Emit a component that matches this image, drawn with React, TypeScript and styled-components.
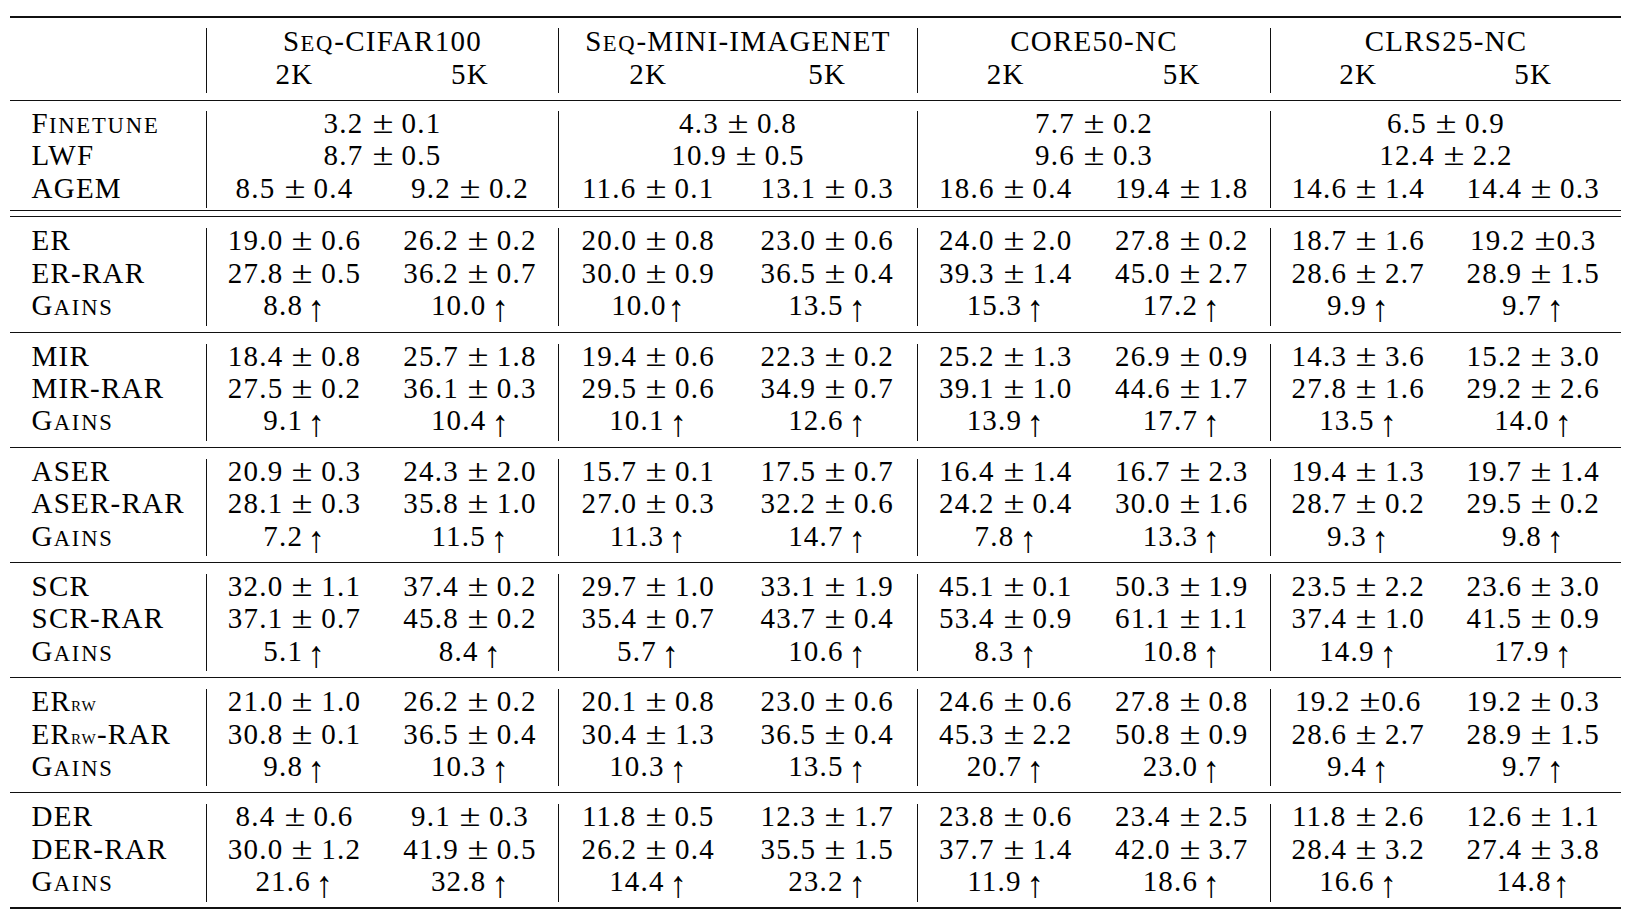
import React from "react";
import styled, { createGlobalStyle } from "styled-components";

const GlobalStyle = createGlobalStyle`
  html, body { margin: 0; padding: 0; background: #ffffff; }
  body {
    font-family: "Liberation Serif", "Times New Roman", serif;
    color: #000;
    -webkit-font-smoothing: antialiased;
  }
`;

const COLS = "196px 176px 176px 179.5px 179.5px 176.5px 176.5px 175.5px 175.5px";

const Page = styled.div`
  width: 1630px;
  height: 921px;
  box-sizing: border-box;
  padding: 16px 0 0 10px;
  background: #fff;
  overflow: hidden;
`;

const Table = styled.div`
  width: 1611px;
  display: flex;
  flex-direction: column;
  font-size: 29px;
  letter-spacing: 0.043em;
`;

const Rule = styled.div<{ $thick?: boolean; $gap: number }>`
  height: ${(p) => (p.$thick ? 2 : 1)}px;
  background: #111;
  margin-top: ${(p) => p.$gap}px;
  flex: none;
`;

const Grid = styled.div<{ $row: number; $lh: number; $gap: number }>`
  display: grid;
  grid-template-columns: ${COLS};
  grid-auto-rows: ${(p) => p.$row}px;
  line-height: ${(p) => p.$lh}px;
  margin-top: ${(p) => p.$gap}px;
  flex: none;
`;

const Cell = styled.div<{ $span?: number; $sep?: boolean }>`
  grid-column: span ${(p) => p.$span ?? 1};
  text-align: center;
  white-space: nowrap;
  box-sizing: border-box;
  border-left: ${(p) => (p.$sep ? "1px solid #111" : "0")};
`;

const Label = styled.div`
  padding-left: 21.5px;
  text-align: left;
  white-space: nowrap;
`;

const Small = styled.span<{ $scale?: number }>`
  font-size: ${(p) => p.$scale ?? 0.78}em;
  letter-spacing: 0.08em;
`;

/* the plus-minus sign of the LaTeX math font is wider than the text one */
const Pm = styled.span<{ $tight?: boolean }>`
  display: inline-block;
  line-height: 16px;
  height: 16px;
  letter-spacing: 0;
  transform: scale(1.32, 1.1);
  transform-origin: 50% 17.8px;
  margin-left: 11px;
  margin-right: ${(p) => (p.$tight ? 4 : 11)}px;
`;

const Arrow = styled.span<{ $tight?: boolean }>`
  display: inline-block;
  line-height: 16px;
  height: 16px;
  letter-spacing: 0;
  transform: translateY(5.5px) scale(1.2, 1.28);
  transform-origin: 50% 17.8px;
  margin-left: ${(p) => (p.$tight ? 2 : 6)}px;
  margin-right: 2px;
`;

function Sc({ t }: { t: string }) {
  const parts: React.ReactNode[] = [];
  let i = 0;
  while (i < t.length) {
    const lower = /[a-z]/.test(t[i]);
    let j = i;
    while (j < t.length && /[a-z]/.test(t[j]) === lower) j++;
    const run = t.slice(i, j);
    parts.push(
      lower ? (
        <Small key={i}>{run.toUpperCase()}</Small>
      ) : (
        <React.Fragment key={i}>{run}</React.Fragment>
      )
    );
    i = j;
  }
  return <>{parts}</>;
}

function Value({ v }: { v: string }) {
  if (v.includes("±")) {
    const [a, b] = v.split("±");
    return (
      <>
        {a.trim()}
        <Pm $tight={!b.startsWith(" ")}>±</Pm>
        {b.trim()}
      </>
    );
  }
  if (v.includes("↑")) {
    const [a] = v.split("↑");
    return (
      <>
        {a.trim()}
        <Arrow $tight={!a.endsWith(" ")}>↑</Arrow>
      </>
    );
  }
  return <>{v}</>;
}

type Row = { label: React.ReactNode; cells: string[] };

const ERrw = (
  <>
    ER<Small $scale={0.52}>RW</Small>
  </>
);

const top: Row[] = [
  { label: <Sc t="Finetune" />, cells: ["3.2 ± 0.1", "4.3 ± 0.8", "7.7 ± 0.2", "6.5 ± 0.9"] },
  { label: "LWF", cells: ["8.7 ± 0.5", "10.9 ± 0.5", "9.6 ± 0.3", "12.4 ± 2.2"] },
  {
    label: "AGEM",
    cells: ["8.5 ± 0.4", "9.2 ± 0.2", "11.6 ± 0.1", "13.1 ± 0.3", "18.6 ± 0.4", "19.4 ± 1.8", "14.6 ± 1.4", "14.4 ± 0.3"],
  },
];

const gains = <Sc t="Gains" />;

const groups: Row[][] = [
  [
    { label: "ER", cells: ["19.0 ± 0.6", "26.2 ± 0.2", "20.0 ± 0.8", "23.0 ± 0.6", "24.0 ± 2.0", "27.8 ± 0.2", "18.7 ± 1.6", "19.2 ±0.3"] },
    { label: "ER-RAR", cells: ["27.8 ± 0.5", "36.2 ± 0.7", "30.0 ± 0.9", "36.5 ± 0.4", "39.3 ± 1.4", "45.0 ± 2.7", "28.6 ± 2.7", "28.9 ± 1.5"] },
    { label: gains, cells: ["8.8 ↑", "10.0 ↑", "10.0↑", "13.5 ↑", "15.3 ↑", "17.2 ↑", "9.9 ↑", "9.7 ↑"] },
  ],
  [
    { label: "MIR", cells: ["18.4 ± 0.8", "25.7 ± 1.8", "19.4 ± 0.6", "22.3 ± 0.2", "25.2 ± 1.3", "26.9 ± 0.9", "14.3 ± 3.6", "15.2 ± 3.0"] },
    { label: "MIR-RAR", cells: ["27.5 ± 0.2", "36.1 ± 0.3", "29.5 ± 0.6", "34.9 ± 0.7", "39.1 ± 1.0", "44.6 ± 1.7", "27.8 ± 1.6", "29.2 ± 2.6"] },
    { label: gains, cells: ["9.1 ↑", "10.4 ↑", "10.1 ↑", "12.6 ↑", "13.9 ↑", "17.7 ↑", "13.5 ↑", "14.0 ↑"] },
  ],
  [
    { label: "ASER", cells: ["20.9 ± 0.3", "24.3 ± 2.0", "15.7 ± 0.1", "17.5 ± 0.7", "16.4 ± 1.4", "16.7 ± 2.3", "19.4 ± 1.3", "19.7 ± 1.4"] },
    { label: "ASER-RAR", cells: ["28.1 ± 0.3", "35.8 ± 1.0", "27.0 ± 0.3", "32.2 ± 0.6", "24.2 ± 0.4", "30.0 ± 1.6", "28.7 ± 0.2", "29.5 ± 0.2"] },
    { label: gains, cells: ["7.2 ↑", "11.5 ↑", "11.3 ↑", "14.7 ↑", "7.8 ↑", "13.3 ↑", "9.3 ↑", "9.8 ↑"] },
  ],
  [
    { label: "SCR", cells: ["32.0 ± 1.1", "37.4 ± 0.2", "29.7 ± 1.0", "33.1 ± 1.9", "45.1 ± 0.1", "50.3 ± 1.9", "23.5 ± 2.2", "23.6 ± 3.0"] },
    { label: "SCR-RAR", cells: ["37.1 ± 0.7", "45.8 ± 0.2", "35.4 ± 0.7", "43.7 ± 0.4", "53.4 ± 0.9", "61.1 ± 1.1", "37.4 ± 1.0", "41.5 ± 0.9"] },
    { label: gains, cells: ["5.1 ↑", "8.4 ↑", "5.7 ↑", "10.6 ↑", "8.3 ↑", "10.8 ↑", "14.9 ↑", "17.9 ↑"] },
  ],
  [
    { label: ERrw, cells: ["21.0 ± 1.0", "26.2 ± 0.2", "20.1 ± 0.8", "23.0 ± 0.6", "24.6 ± 0.6", "27.8 ± 0.8", "19.2 ±0.6", "19.2 ± 0.3"] },
    { label: <>{ERrw}-RAR</>, cells: ["30.8 ± 0.1", "36.5 ± 0.4", "30.4 ± 1.3", "36.5 ± 0.4", "45.3 ± 2.2", "50.8 ± 0.9", "28.6 ± 2.7", "28.9 ± 1.5"] },
    { label: gains, cells: ["9.8 ↑", "10.3 ↑", "10.3 ↑", "13.5 ↑", "20.7 ↑", "23.0 ↑", "9.4 ↑", "9.7 ↑"] },
  ],
  [
    { label: "DER", cells: ["8.4 ± 0.6", "9.1 ± 0.3", "11.8 ± 0.5", "12.3 ± 1.7", "23.8 ± 0.6", "23.4 ± 2.5", "11.8 ± 2.6", "12.6 ± 1.1"] },
    { label: "DER-RAR", cells: ["30.0 ± 1.2", "41.9 ± 0.5", "26.2 ± 0.4", "35.5 ± 1.5", "37.7 ± 1.4", "42.0 ± 3.7", "28.4 ± 3.2", "27.4 ± 3.8"] },
    { label: gains, cells: ["21.6 ↑", "32.8 ↑", "14.4 ↑", "23.2 ↑", "11.9 ↑", "18.6 ↑", "16.6 ↑", "14.8↑"] },
  ],
];

const datasets = ["Seq-CIFAR100", "Seq-MINI-IMAGENET", "CORE50-NC", "CLRS25-NC"];

function BodyRow({ row }: { row: Row }) {
  const span = row.cells.length === 4 ? 2 : 1;
  return (
    <>
      <Label>{row.label}</Label>
      {row.cells.map((c, i) => (
        <Cell key={i} $span={span} $sep={span === 2 || i % 2 === 0}>
          <Value v={c} />
        </Cell>
      ))}
    </>
  );
}

const ROW_H = 32.4;
const BODY_LH = 24.5;

export default function App() {
  return (
    <>
      <GlobalStyle />
      <Page>
        <Table>
          <Rule $thick $gap={0} />
          <Grid $row={32.5} $lh={27.5} $gap={10}>
            <Label />
            {datasets.map((d) => (
              <Cell key={d} $span={2} $sep>
                <Sc t={d} />
              </Cell>
            ))}
            <Label />
            {datasets.map((d) => (
              <React.Fragment key={d}>
                <Cell $sep>2K</Cell>
                <Cell>5K</Cell>
              </React.Fragment>
            ))}
          </Grid>
          <Rule $gap={7} />
          <Grid $row={ROW_H} $lh={BODY_LH} $gap={10}>
            {top.map((r, i) => (
              <BodyRow key={i} row={r} />
            ))}
          </Grid>
          <Rule $gap={2.3} />
          <Rule $gap={5} />
          {groups.map((g, gi) => (
            <React.Fragment key={gi}>
              <Grid $row={ROW_H} $lh={BODY_LH} $gap={11}>
                {g.map((r, i) => (
                  <BodyRow key={i} row={r} />
                ))}
              </Grid>
              <Rule $thick={gi === groups.length - 1} $gap={gi === groups.length - 1 ? 5.5 : 6} />
            </React.Fragment>
          ))}
        </Table>
      </Page>
    </>
  );
}
